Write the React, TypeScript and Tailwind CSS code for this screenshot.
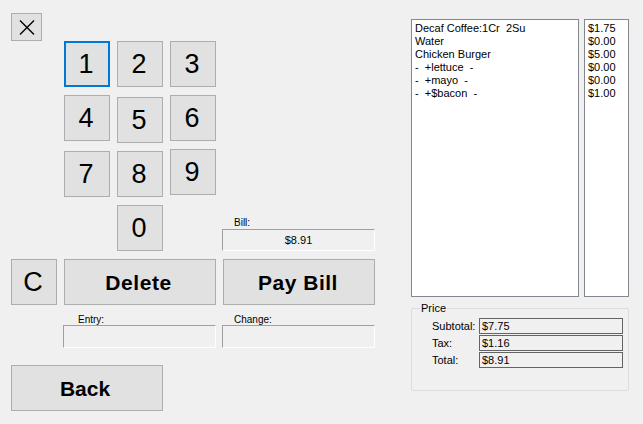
import React from 'react';
import clsx from 'clsx';

const font = { fontFamily: '"Liberation Sans", Arial, sans-serif' };

function Btn({ className, focus, children }: { className?: string; focus?: boolean; children?: React.ReactNode }) {
  return (
    <button
      className={clsx(
        'flex shrink-0 items-center justify-center bg-[#e1e1e1] leading-none text-black',
        focus ? 'border-2 border-[#0078d7]' : 'border border-[#adadad]',
        className
      )}
    >
      {children}
    </button>
  );
}

function Key({ n, focus, className }: { n: string; focus?: boolean; className?: string }) {
  return (
    <Btn focus={focus} className={clsx('h-[46px] w-[46px] pr-[2px] text-[27px]', className)}>
      {n}
    </Btn>
  );
}

function Field({ label, value, pad, className }: { label: string; value?: string; pad: string; className?: string }) {
  return (
    <div className={clsx('flex flex-col', className)}>
      <span className={clsx('h-[11px] text-[10px] leading-[11px]', pad)}>{label}</span>
      <div className="flex h-[23px] w-[153px] items-center justify-center border-t border-l border-t-[#a0a0a0] border-l-[#a0a0a0] border-b border-r border-b-white border-r-white text-[11px]">
        {value}
      </div>
    </div>
  );
}

const items = ['Decaf Coffee:1Cr  2Su', 'Water', 'Chicken Burger', '-  +lettuce  -', '-  +mayo  -', '-  +$bacon  -'];
const prices = ['$1.75', '$0.00', '$5.00', '$0.00', '$0.00', '$1.00'];
const totals = [
  ['Subtotal:', '$7.75'],
  ['Tax:', '$1.16'],
  ['Total:', '$8.91'],
];

export default function App() {
  return (
    <div className="flex h-[424px] w-[643px] overflow-hidden bg-[#f0f0f0] text-black" style={font}>
      {/* left: keypad */}
      <div className="flex w-[411px] shrink-0 flex-col">
        <div className="pt-[13px] pl-[11px]">
          <Btn className="h-[28px] w-[31px]">
            <svg width="16" height="15" viewBox="0 0 16 15">
              <path d="M1 0.5 L15 14.5 M15 0.5 L1 14.5" stroke="#000" strokeWidth="1.4" fill="none" />
            </svg>
          </Btn>
        </div>
        <div className="ml-[64px] flex gap-[7px]">
          <Key n="1" focus />
          <Key n="2" />
          <Key n="3" />
        </div>
        <div className="mt-[8px] ml-[64px] flex items-start gap-[7px]">
          <Key n="4" />
          <Key n="5" className="mt-[2px]" />
          <Key n="6" />
        </div>
        <div className="mt-[8px] ml-[64px] flex items-start gap-[7px]">
          <Key n="7" />
          <Key n="8" />
          <Key n="9" className="-mt-[2px]" />
        </div>
        <div className="mt-[8px] flex items-end">
          <Key n="0" className="ml-[117px]" />
          <div className="ml-[59px] flex flex-col">
            <span className="pl-[12px] text-[10px] leading-[12px]">Bill:</span>
            <div className="flex h-[22px] w-[153px] items-center justify-center border-t border-l border-t-[#a0a0a0] border-l-[#a0a0a0] border-b border-r border-b-white border-r-white text-[11px]">
              $8.91
            </div>
          </div>
        </div>
        <div className="mt-[8px] flex gap-[7px] pl-[11px]">
          <Btn className="h-[46px] w-[46px] pr-[2px] text-[27px]">C</Btn>
          <Btn className="h-[46px] w-[152px] pr-[3px] text-[21px] font-bold tracking-[0.6px]">Delete</Btn>
          <Btn className="h-[46px] w-[152px] pr-[2px] text-[21px] font-bold tracking-[0.5px]">Pay Bill</Btn>
        </div>
        <div className="mt-[9px] flex">
          <Field label="Entry:" pad="pl-[15px]" className="ml-[63px]" />
          <Field label="Change:" pad="pl-[12px]" className="ml-[6px]" />
        </div>
        <div className="mt-[17px] pl-[11px]">
          <Btn className="h-[46px] w-[152px] pr-[4px] text-[21px] font-bold">Back</Btn>
        </div>
      </div>

      {/* right: order */}
      <div className="flex flex-col pt-[19px]">
        <div className="flex gap-[5px]">
          <div className="h-[278px] w-[168px] border border-[#828790] bg-white pt-[2px] pl-[3px] text-[11px] leading-[13px]">
            {items.map((t) => (
              <div key={t} className="whitespace-pre">
                {t}
              </div>
            ))}
          </div>
          <div className="h-[278px] w-[45px] border border-[#828790] bg-white pt-[2px] pl-[3px] text-[11px] leading-[13px]">
            {prices.map((p, i) => (
              <div key={i}>{p}</div>
            ))}
          </div>
        </div>
        <div className="relative mt-[11px] h-[83px] w-[218px] rounded-[2px] border border-[#dcdcdc] pt-[9px]">
          <span className="absolute -top-[7px] left-[8px] bg-[#f0f0f0] px-[1px] text-[11px] leading-[13px]">Price</span>
          <div className="flex flex-col gap-[1px]">
            {totals.map(([l, v]) => (
              <div key={l} className="flex items-center">
                <span className="w-[67px] pl-[20px] text-[11px] leading-[13px]">{l}</span>
                <div className="flex h-[16px] w-[144px] items-center border border-[#646464] pl-[2px] text-[11px]">
                  {v}
                </div>
              </div>
            ))}
          </div>
        </div>
      </div>
    </div>
  );
}
